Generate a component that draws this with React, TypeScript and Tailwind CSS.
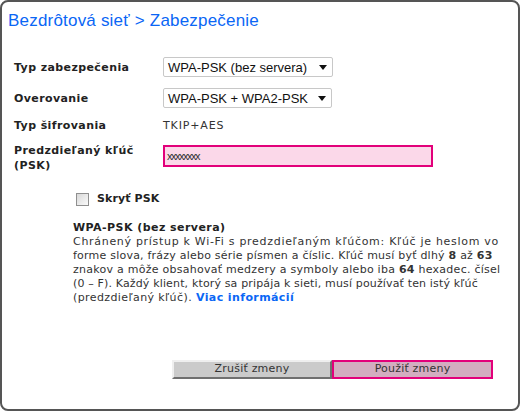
import React from "react";

const verdana = { fontFamily: "Verdana, 'DejaVu Sans', sans-serif" };
const arial = { fontFamily: "'Liberation Sans', Arial, sans-serif" };

function Select({ value, w }: { value: string; w: string }) {
  return (
    <div
      className={`flex items-center justify-between h-[20px] ${w} border border-[#c8c8c8] rounded-[2px] bg-white pl-[4px] pr-[5px] text-[13px] text-[#111]`}
      style={arial}
    >
      <span className="leading-none">{value}</span>
      <svg width="8" height="5" viewBox="0 0 8 5">
        <path d="M0 0 L8 0 L4 5 Z" fill="#111" />
      </svg>
    </div>
  );
}

export default function App() {
  return (
    <div className="w-[520px] h-[411px] bg-white">
      <div className="w-[520px] h-[411px] border-2 border-[#555] rounded-[8px] flex flex-col text-[#222]">
        <div
          className="pl-[6px] pt-[10px] text-[17px] leading-[18px] tracking-[0.2px] text-[#0a66f5]"
          style={arial}
        >
          Bezdrôtová sieť &gt; Zabezpečenie
        </div>

        <div className="pl-[12px] mt-[27px] flex flex-col" style={verdana}>
          <div className="flex items-center h-[20px]">
            <div className="w-[149px] text-[11px] font-bold tracking-[0.4px] pt-[3px]">Typ zabezpečenia</div>
            <Select value="WPA-PSK (bez servera)" w="w-[170px]" />
          </div>
          <div className="flex items-center h-[20px] mt-[11px]">
            <div className="w-[149px] text-[11px] font-bold tracking-[0.4px] pt-[3px]">Overovanie</div>
            <Select value="WPA-PSK + WPA2-PSK" w="w-[169px]" />
          </div>
          <div className="flex items-center h-[18px] mt-[9px]">
            <div className="w-[149px] text-[11px] font-bold tracking-[0.4px]">Typ šifrovania</div>
            <div className="text-[11px] tracking-[0.85px] text-[#333]">TKIP+AES</div>
          </div>
          <div className="flex items-start mt-[8px]">
            <div className="w-[149px] text-[11px] font-bold tracking-[0.4px] leading-[15px]">
              Predzdieľaný kľúč
              <br />
              (PSK)
            </div>
            <div
              className="mt-[2px] w-[270px] h-[22px] border-2 border-[#e2007a] bg-[#fbd8e9] flex items-center pl-[2px] text-[11px] tracking-[-1.5px] text-[#333]"
              style={arial}
            >
              xxxxxxxx
            </div>
          </div>
        </div>

        <div className="pl-[74px] mt-[18px] flex items-center gap-[8px]" style={verdana}>
          <div className="w-[13px] h-[13px] border border-[#8f8f8f] bg-gradient-to-br from-[#d8d8d8] to-[#fbfbfb]" />
          <span className="text-[11px] font-bold tracking-[0.1px]">Skryť PSK</span>
        </div>

        <div
          className="pl-[71px] mt-[13px] text-[11px] leading-[14px] text-[#333] whitespace-nowrap"
          style={verdana}
        >
          <div className="font-bold text-[#222] tracking-[0.45px]">WPA-PSK (bez servera)</div>
          <div className="tracking-[0.7px]">
            Chránený prístup k Wi-Fi s predzdieľaným kľúčom: Kľúč je heslom vo
          </div>
          <div className="tracking-[0.22px]">
            forme slova, frázy alebo série písmen a číslic. Kľúč musí byť dlhý <b>8</b> až <b>63</b>
          </div>
          <div className="tracking-[0.26px]">
            znakov a môže obsahovať medzery a symboly alebo iba <b>64</b> hexadec. čísel
          </div>
          <div className="tracking-[0.15px]">
            (0 – F). Každý klient, ktorý sa pripája k sieti, musí používať ten istý kľúč
          </div>
          <div className="tracking-[0.4px]">
            (predzdieľaný kľúč). <span className="font-bold text-[#0a66f5]">Viac informácií</span>
          </div>
        </div>

        <div className="flex-1" />

        <div className="flex pl-[170px] mb-[30px]" style={verdana}>
          <div className="w-[160px] h-[19px] bg-[#cbcbcb] border-t-2 border-l-2 border-t-[#efefef] border-l-[#efefef] border-b-2 border-r-2 border-b-[#707070] border-r-[#707070] flex items-center justify-center text-[11px] tracking-[0.2px] text-[#333]">
            Zrušiť zmeny
          </div>
          <div className="w-[161px] h-[19px] bg-[#d3adc0] border-2 border-[#e2007a] flex items-center justify-center text-[11px] tracking-[0.2px] text-[#333]">
            Použiť zmeny
          </div>
        </div>
      </div>
    </div>
  );
}
